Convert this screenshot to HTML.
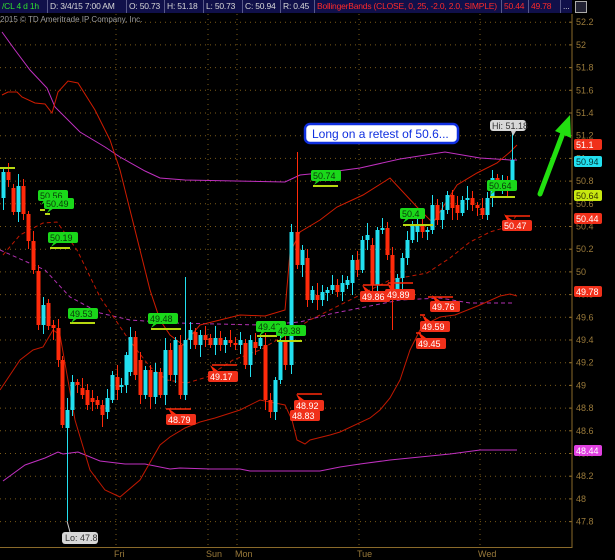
<!DOCTYPE html>
<html><head><meta charset="utf-8">
<style>
html,body{margin:0;padding:0;background:#000;width:615px;height:560px;overflow:hidden;font-family:"Liberation Sans",sans-serif}
#hdr{position:absolute;left:0;top:0;height:13px;width:572px;background:#10104a;display:flex;font-size:8.5px;letter-spacing:-0.2px;line-height:13px;color:#d8d8d8}
#hdr div{border-right:1px solid #5a5a8a;padding:0 1px 0 2px;white-space:nowrap;overflow:hidden;flex:none}
svg{position:absolute;left:0;top:0}
</style></head><body>
<svg id="s" width="615" height="560" xmlns="http://www.w3.org/2000/svg" font-family="Liberation Sans, sans-serif"></svg>
<div id="hdr">
<div style="color:#2fe02f;width:44px">/CL 4 d 1h</div>
<div style="width:75px">D: 3/4/15 7:00 AM</div>
<div style="width:34px">O: 50.73</div>
<div style="width:35px">H: 51.18</div>
<div style="width:35px">L: 50.73</div>
<div style="width:34px">C: 50.94</div>
<div style="width:30px">R: 0.45</div>
<div style="color:#ff2a2a;width:183px">BollingerBands (CLOSE, 0, 25, -2.0, 2.0, SIMPLE)</div>
<div style="color:#ff2a2a;width:23px">50.44</div>
<div style="color:#ff2a2a;width:28px">49.78</div>
<div style="border:none">...</div>
</div>
<div style="position:absolute;left:575px;top:1px;width:10px;height:10px;border:1px solid #aaa;background:#223"></div>
<div style="position:absolute;left:0;top:15px;font-size:8px;color:#9a9a9a">2015 © TD Ameritrade IP Company, Inc.</div>
<script>
var s=document.getElementById('s'),h='';
function Y(p){return 113+(51.4-p)*113.5}
for(var p=52.2;p>47.7;p-=0.2){var y=Y(p).toFixed(1);h+='<line x1="0" x2="572" y1="'+y+'" y2="'+y+'" stroke="#7a5a18" stroke-dasharray="1,4"/>';
h+='<line x1="569" x2="572" y1="'+y+'" y2="'+y+'" stroke="#8a6a2a"/>';
h+='<text x="576" y="'+(+y+3)+'" font-size="9" fill="#9a7a3a">'+(Math.round(p*10)/10)+'</text>';}
[116,208,237,359,480].forEach(function(x){h+='<line x1="'+x+'" x2="'+x+'" y1="14" y2="547" stroke="#7a5a18" stroke-dasharray="1,4"/>';});
h+='<line x1="572" x2="572" y1="14" y2="548" stroke="#8a6a2a"/><line x1="0" x2="572" y1="547.5" y2="547.5" stroke="#8a6a2a"/>';
[['Fri',114],['Sun',206],['Mon',235],['Tue',357],['Wed',478]].forEach(function(d){h+='<text x="'+d[1]+'" y="557" font-size="9" fill="#9a7a3a">'+d[0]+'</text>';});
function pl(pts,c,w,da){h+='<polyline fill="none" stroke="'+c+'" stroke-width="'+(w||1)+'" '+(da?'stroke-dasharray="'+da+'"':'')+' points="'+pts+'"/>';}
pl('2,32 15,50 30,70 47,88 55,107 80,132 105,147 120,157 145,171 160,178 185,180 285,182 300,175 330,172 360,168 400,159 445,152 480,158 510,160 517,160','#c030c0');
pl('3,481 25,465 45,458 58,452 63,454 78,452 100,461 125,464 145,464 170,469 180,468 210,469 240,469 250,471 290,471 320,471 340,467 360,464 390,460 420,457 450,454 480,450 495,450 517,450','#c030c0');
pl('0,250 45,270 70,297 100,313 130,320 175,323 260,325 300,322 330,314 360,308 400,300 440,298 470,303 515,303','#b030b0',1,'4,3');
pl('2,95 8,92 17,92 22,97 35,103 45,104 52,113 58,92 68,81 78,83 95,110 110,140 120,170 130,210 140,250 150,290 160,320 170,335 183,345 200,325 240,315 265,316 285,310 290,253 300,232 320,220 337,207 363,195 390,178 417,207 433,223 443,207 457,185 477,173 497,163 510,152 517,145','#d01c00');
pl('0,390 20,360 33,350 43,347 53,330 60,335 75,420 90,470 105,490 120,497 140,480 160,445 170,437 185,428 200,422 215,418 240,410 260,400 275,403 285,405 292,420 297,440 305,444 310,440 330,435 340,432 370,418 380,410 390,398 400,380 410,350 420,330 430,322 440,317 455,315 480,305 500,296 510,294 517,296','#c01800');
pl('3,255 20,235 43,223 57,222 77,250 100,297 127,337 150,367 167,380 187,383 207,377 233,360 260,350 287,334 310,320 330,310 360,295 390,280 427,273 450,258 470,242 490,232 507,227 517,215','#c01800',1,'4,3');
var c=[[3,198,172],[8,172,180],[13,188,212],[18,212,186],[23,186,214],[28,214,241],[33,241,270],[38,271,325],[43,325,305],[48,303,326],[53,325,328],[58,328,360],[62,360,425],[67,428,410],[72,410,382],[77,382,385],[82,388,395],[87,390,405],[92,398,402],[97,400,405],[102,405,415],[107,412,398],[112,400,375],[117,377,390],[121,387,385],[126,385,355],[130,372,337],[135,337,375],[140,360,395],[145,395,370],[150,370,397],[155,397,372],[160,372,395],[165,395,350],[170,350,375],[175,375,340],[180,345,395],[185,395,340],[190,340,330],[195,332,345],[200,345,335],[205,335,340],[210,338,345],[215,345,338],[220,338,345],[225,345,340],[230,340,343],[235,343,345],[240,345,340],[245,343,365],[250,365,340],[255,342,348],[260,346,338],[265,345,400],[270,400,412],[275,412,380],[280,380,340],[285,340,365],[291,365,232],[297,232,265],[302,265,250],[307,258,300],[312,300,290],[317,295,300],[322,300,292],[327,293,290],[332,290,285],[337,285,292],[342,292,283],[347,285,280],[352,283,260],[357,260,270],[362,270,240],[367,240,235],[372,245,285],[377,285,230],[382,230,228],[387,228,255],[392,255,290],[397,290,278],[402,278,258],[407,258,240],[412,240,225],[417,232,225],[422,225,232],[427,232,230],[432,230,205],[437,205,220],[442,220,210],[447,210,195],[452,195,208],[457,205,213],[462,213,200],[467,200,198],[472,198,205],[477,205,208],[482,208,215],[487,215,198],[492,198,178],[497,178,182],[502,182,180],[507,185,190],[512,188,160]];
var r=[5,9,4,12,7,3,10,6,8,4];
c.forEach(function(k,i){var x=k[0],o=k[1],cl=k[2],up=cl<o,t=Math.min(o,cl),b=Math.max(o,cl);if(b-t<2)b=t+2;
var hi=t-r[i%10],lo=b+r[(i+3)%10];if(x==67)lo=521;if(x==297)hi=152;if(x==185)hi=277;if(x==512)hi=132;if(x==392)lo=330;
var col=up?'#22e0f0':'#ff2a0a';h+='<line x1="'+(x+0.5)+'" x2="'+(x+0.5)+'" y1="'+hi+'" y2="'+lo+'" stroke="'+col+'"/><rect x="'+(x-1.5)+'" y="'+t+'" width="4" height="'+(b-t)+'" fill="'+col+'"/>';});
function gl(t,x,y,lx,ly,lw){h+='<line x1="'+lx+'" x2="'+(lx+lw)+'" y1="'+ly+'" y2="'+ly+'" stroke="#b8d810" stroke-width="2"/><path d="M'+(x+6)+' '+(y+10)+' l-3 5 l7 -5z" fill="#1ad81a"/><rect x="'+x+'" y="'+y+'" width="'+(t.length*5+5)+'" height="11" rx="2" fill="#1ad81a"/><text x="'+(x+2)+'" y="'+(y+9)+'" font-size="9" fill="#0a3a0a">'+t+'</text>';}
function rl(t,x,y,lx,ly,lw){if(lw)h+='<line x1="'+lx+'" x2="'+(lx+lw)+'" y1="'+ly+'" y2="'+ly+'" stroke="#ff2a0a" stroke-width="1.5"/><path d="M'+(x+5)+' '+y+' l-3 -6 l8 6z" fill="#ff2a0a"/>';h+='<rect x="'+x+'" y="'+y+'" width="'+(t.length*5+5)+'" height="11" rx="2" fill="#f0301a"/><text x="'+(x+2)+'" y="'+(y+9)+'" font-size="9" fill="#fff">'+t+'</text>';}
h+='<line x1="0" x2="15" y1="168" y2="168" stroke="#b8d810" stroke-width="2"/>';
gl('50.56',38,190,40,210,5);gl('50.49',44,198,45,214,5);gl('50.19',48,232,50,248,20);gl('49.53',68,308,70,323,25);gl('49.48',148,313,151,329,30);gl('49.42',256,321,257,336,20);gl('49.38',276,325,277,341,25);gl('50.74',311,170,313,186,25);gl('50.4',400,208,403,225,30);gl('50.64',487,180,490,197,25);
rl('49.17',208,371,212,365,25);rl('48.79',166,414,166,409,25);rl('48.92',294,400,297,394,25);rl('48.83',290,410);rl('49.86',360,291,363,285,25);rl('49.89',385,289,388,283,25);rl('49.76',430,301,428,297,25);rl('49.59',420,321,420,315,5);rl('49.45',416,338,416,333,5);rl('50.47',502,220,505,216,25);
function at(t,y,bg,fg){h+='<rect x="574" y="'+(y-6)+'" width="28" height="11" rx="2" fill="'+bg+'"/><text x="576" y="'+(y+3)+'" font-size="9" fill="'+fg+'">'+t+'</text>';}
at('51.1',145,'#f0301a','#fff');at('50.94',162,'#22e0f0','#033');at('50.64',196,'#c8e810','#330');at('50.44',219,'#f0301a','#fff');at('49.78',292,'#f0301a','#fff');at('48.44',451,'#e040e0','#fff');
h+='<path d="M511 131 l2 5 l3 -5z" fill="#ccc"/><rect x="490" y="120" width="36" height="11" rx="3" fill="#d8d8d8"/><text x="492" y="129" font-size="9" fill="#333">Hi: 51.18</text>';
h+='<line x1="67" x2="70" y1="521" y2="532" stroke="#ccc"/><rect x="62" y="532" width="36" height="12" rx="3" fill="#d8d8d8"/><text x="65" y="541" font-size="9" fill="#333">Lo: 47.8</text>';
h+='<rect x="305" y="124" width="153" height="19" rx="5" fill="#fff" stroke="#1030e0" stroke-width="2.5"/><text x="312" y="138" font-size="12" fill="#1030e0">Long on a retest of 50.6...</text>';
h+='<line x1="540" y1="194" x2="563" y2="133" stroke="#22e010" stroke-width="5" stroke-linecap="round"/><path d="M555 131 L570 115 L571 138 Z" fill="#22e010"/>';
s.innerHTML=h;
</script>
</body></html>
